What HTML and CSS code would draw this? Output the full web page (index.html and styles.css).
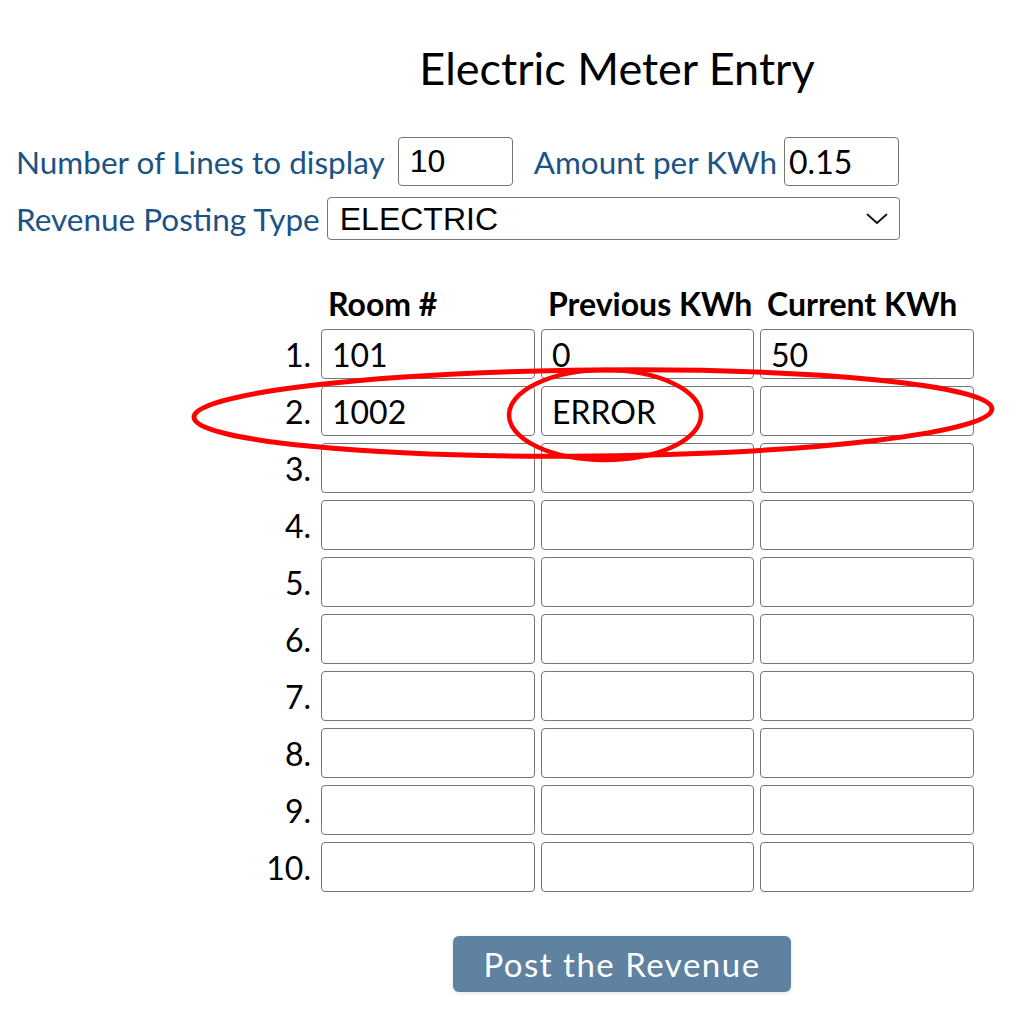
FILE: index.html
```html
<!DOCTYPE html>
<html>
<head>
<meta charset="utf-8">
<title>Electric Meter Entry</title>
<link rel="stylesheet" href="styles.css">
</head>
<body>
<h1 class="title">Electric Meter Entry</h1>
<div class="settings">
  <div class="setting-row">
    <label class="field-label">Number of Lines to display</label>
    <input class="box box-lines arial" type="text" value="10">
    <label class="field-label label-amount">Amount per KWh</label>
    <input class="box box-amount" type="text" value="0.15">
  </div>
  <div class="setting-row row-type">
    <label class="field-label">Revenue Posting Type</label>
    <div class="select-wrap">
      <select class="type-select arial"><option>ELECTRIC</option></select>
      <svg class="chevron" width="22" height="12" viewBox="0 0 22 12"><path d="M1.5 1.5 L11 10 L20.5 1.5" fill="none" stroke="#111" stroke-width="1.8" stroke-linecap="round" stroke-linejoin="round"/></svg>
    </div>
  </div>
</div>
<div class="sheet">
  <div class="grid">
    <div class="num"></div>
    <div class="head">Room #</div>
    <div class="head">Previous KWh</div>
    <div class="head">Current KWh</div>

    <div class="num">1.</div>
    <input class="cell" type="text" value="101">
    <input class="cell" type="text" value="0">
    <input class="cell" type="text" value="50">

    <div class="num">2.</div>
    <input class="cell" type="text" value="1002">
    <input class="cell" type="text" value="ERROR">
    <input class="cell" type="text" value="">

    <div class="num">3.</div>
    <input class="cell" type="text"><input class="cell" type="text"><input class="cell" type="text">
    <div class="num">4.</div>
    <input class="cell" type="text"><input class="cell" type="text"><input class="cell" type="text">
    <div class="num">5.</div>
    <input class="cell" type="text"><input class="cell" type="text"><input class="cell" type="text">
    <div class="num">6.</div>
    <input class="cell" type="text"><input class="cell" type="text"><input class="cell" type="text">
    <div class="num">7.</div>
    <input class="cell" type="text"><input class="cell" type="text"><input class="cell" type="text">
    <div class="num">8.</div>
    <input class="cell" type="text"><input class="cell" type="text"><input class="cell" type="text">
    <div class="num">9.</div>
    <input class="cell" type="text"><input class="cell" type="text"><input class="cell" type="text">
    <div class="num">10.</div>
    <input class="cell" type="text"><input class="cell" type="text"><input class="cell" type="text">
  </div>
  <div class="actions">
    <button class="post-btn" type="button">Post the Revenue</button>
  </div>
</div>
<svg class="marks" width="1032" height="1033" viewBox="0 0 1032 1033">
  <ellipse cx="593" cy="413" rx="399" ry="43" fill="none" stroke="#ff0000" stroke-width="5" transform="rotate(-0.6 593 413)"/>
  <ellipse cx="605" cy="415" rx="96" ry="45" fill="none" stroke="#ff0000" stroke-width="4.5"/>
</svg>
</body>
</html>
```
FILE: styles.css
```css
html, body {
  margin: 0;
  padding: 0;
  background: #ffffff;
}
body {
  padding: 0 16px;
  font-family: Lato, "Noto Sans", sans-serif;
  color: #000;
  position: relative;
  width: 1000px;
  height: 1033px;
  overflow: hidden;
}
.title {
  margin: 41px 0 0 244px;
  width: 714px;
  text-align: center;
  font-size: 45px;
  font-weight: 400;
  line-height: 55px;
}
.settings {
  margin-top: 41px;
}
.setting-row {
  display: flex;
  align-items: center;
  height: 49px;
}
.row-type {
  margin-top: 11px;
  height: 43px;
}
.field-label {
  font-size: 31.5px;
  color: #1b5385;
  white-space: nowrap;
}
.label-amount {
  margin-left: 21px;
}
.box {
  box-sizing: border-box;
  height: 49px;
  width: 115px;
  border: 1px solid #767676;
  border-radius: 4px;
  padding: 0 0 0 11px;
  font-family: Lato, sans-serif;
  font-size: 32px;
  color: #000;
  outline: none;
}
.box-lines {
  margin-left: 13px;
  padding-left: 11px;
}
.box-amount {
  margin-left: 7px;
  padding-left: 4px;
}
.arial {
  font-family: "Liberation Sans", Arial, sans-serif;
}
.select-wrap {
  position: relative;
  margin-left: 7px;
  display: flex;
}
.type-select {
  box-sizing: border-box;
  width: 573px;
  height: 43px;
  border: 1px solid #767676;
  border-radius: 4px;
  padding: 0 0 0 12px;
  font-size: 32px;
  color: #000;
  background: #fff;
  appearance: none;
  -webkit-appearance: none;
  outline: none;
}
.chevron {
  position: absolute;
  right: 12px;
  top: 16px;
  pointer-events: none;
}
.sheet {
  margin: 46px 0 0 244px;
  width: 724px;
}
.grid {
  display: grid;
  grid-template-columns: 55px 214px 213px 214px;
  column-gap: 6px;
  row-gap: 7px;
  grid-auto-rows: 50px;
  grid-template-rows: 36px;
}
.head {
  font-size: 32px;
  font-weight: 700;
  line-height: 36px;
  padding-left: 7px;
  white-space: nowrap;
}
.num {
  font-size: 32px;
  text-align: right;
  padding-right: 4px;
  display: flex;
  align-items: center;
  justify-content: flex-end;
}
.cell {
  box-sizing: border-box;
  width: 100%;
  height: 50px;
  border: 1px solid #767676;
  border-radius: 4px;
  padding: 0 0 0 10px;
  font-family: Lato, sans-serif;
  font-size: 32px;
  color: #000;
  background: #fff;
  outline: none;
  margin: 0;
}
.actions {
  margin-top: 44px;
  padding-left: 193px;
}
.post-btn {
  width: 338px;
  height: 56px;
  background: #5e82a0;
  color: #fff;
  border: none;
  border-radius: 6px;
  font-family: Lato, sans-serif;
  font-size: 33px;
  letter-spacing: 1.5px;
  box-shadow: 0 1px 4px rgba(0,0,0,0.12);
  padding: 0;
}
.marks {
  position: absolute;
  left: 0;
  top: 0;
  pointer-events: none;
}
```
